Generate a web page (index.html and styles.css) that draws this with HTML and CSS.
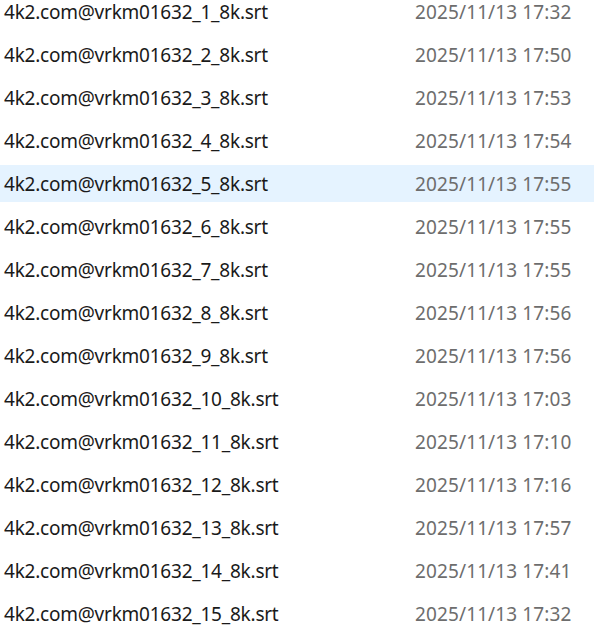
FILE: index.html
```html
<!DOCTYPE html>
<html>
<head>
<meta charset="utf-8">
<link rel="stylesheet" href="styles.css">
</head>
<body>
<div class="list">
  <div class="row"><span class="name">4k2.com@vrkm01632_1_8k.srt</span><span class="date">2025/11/13 17:32</span></div>
  <div class="row"><span class="name">4k2.com@vrkm01632_2_8k.srt</span><span class="date">2025/11/13 17:50</span></div>
  <div class="row"><span class="name">4k2.com@vrkm01632_3_8k.srt</span><span class="date">2025/11/13 17:53</span></div>
  <div class="row"><span class="name">4k2.com@vrkm01632_4_8k.srt</span><span class="date">2025/11/13 17:54</span></div>
  <div class="row hover"><span class="name">4k2.com@vrkm01632_5_8k.srt</span><span class="date">2025/11/13 17:55</span></div>
  <div class="row"><span class="name">4k2.com@vrkm01632_6_8k.srt</span><span class="date">2025/11/13 17:55</span></div>
  <div class="row"><span class="name">4k2.com@vrkm01632_7_8k.srt</span><span class="date">2025/11/13 17:55</span></div>
  <div class="row"><span class="name">4k2.com@vrkm01632_8_8k.srt</span><span class="date">2025/11/13 17:56</span></div>
  <div class="row"><span class="name">4k2.com@vrkm01632_9_8k.srt</span><span class="date">2025/11/13 17:56</span></div>
  <div class="row"><span class="name">4k2.com@vrkm01632_10_8k.srt</span><span class="date">2025/11/13 17:03</span></div>
  <div class="row"><span class="name">4k2.com@vrkm01632_11_8k.srt</span><span class="date">2025/11/13 17:10</span></div>
  <div class="row"><span class="name">4k2.com@vrkm01632_12_8k.srt</span><span class="date">2025/11/13 17:16</span></div>
  <div class="row"><span class="name">4k2.com@vrkm01632_13_8k.srt</span><span class="date">2025/11/13 17:57</span></div>
  <div class="row"><span class="name">4k2.com@vrkm01632_14_8k.srt</span><span class="date">2025/11/13 17:41</span></div>
  <div class="row"><span class="name">4k2.com@vrkm01632_15_8k.srt</span><span class="date">2025/11/13 17:32</span></div>
</div>
</body>
</html>
```
FILE: styles.css
```css
html, body {
  margin: 0;
  padding: 0;
  background: #ffffff;
  overflow: hidden;
}
.list {
  display: flex;
  flex-direction: column;
  gap: 6px;
  margin-top: -7px;
  font-family: "Noto Sans", "Noto Sans CJK SC", sans-serif;
  font-size: 19px;
}
.row {
  display: flex;
  align-items: center;
  height: 37px;
}
.row.hover {
  background: #e5f3ff;
}
.name {
  width: 411px;
  padding-left: 4px;
  color: #1a1a1a;
  white-space: nowrap;
  letter-spacing: -0.23px;
}
.date {
  color: #6d6d6d;
  white-space: nowrap;
  letter-spacing: 0.12px;
}
```
